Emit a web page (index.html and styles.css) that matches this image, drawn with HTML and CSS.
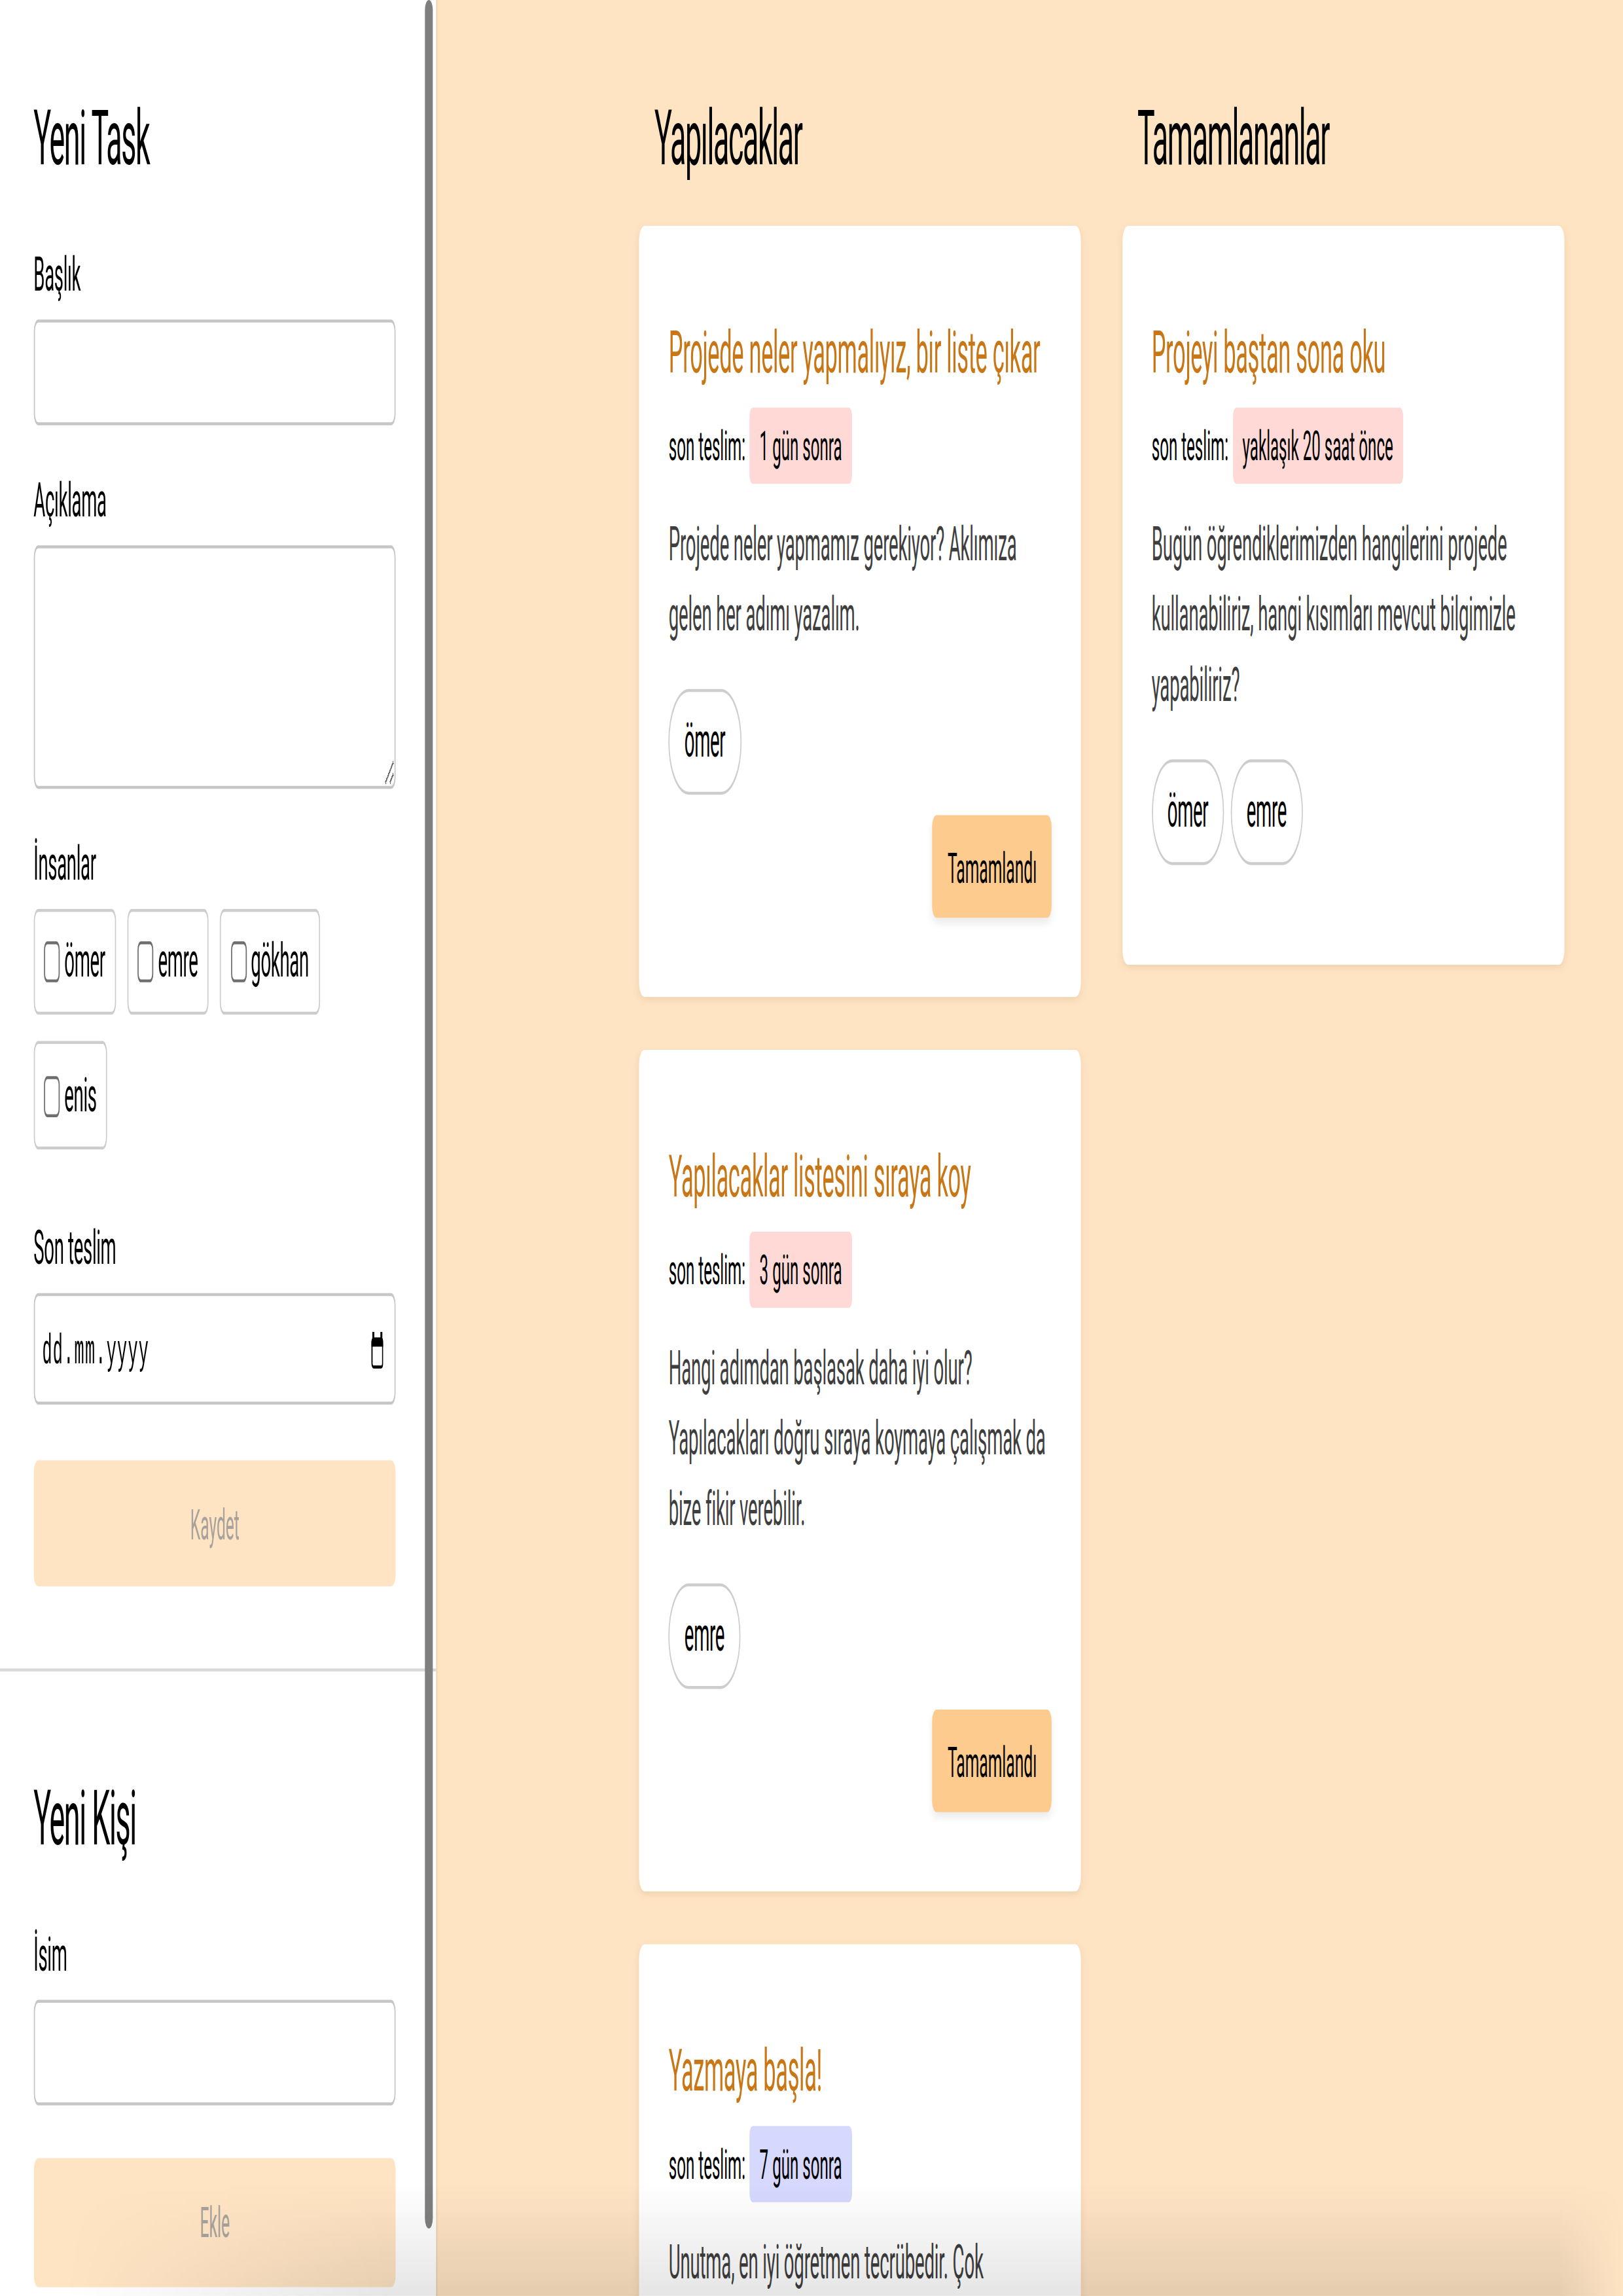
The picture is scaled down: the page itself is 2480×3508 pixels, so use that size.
FILE: index.html
```html
<!DOCTYPE html>
<html lang="tr">
<head>
<meta charset="utf-8">
<title>Tasklar</title>
<link rel="stylesheet" href="styles.css">
</head>
<body>
<div class="app">
  <aside class="sidebar">
    <form class="panel panel-task">
      <h2 class="panel-title">Yeni Task</h2>
      <div class="field">
        <label class="field-label" for="task-title">Başlık</label>
        <input class="text-input" id="task-title" type="text">
      </div>
      <div class="field">
        <label class="field-label" for="task-desc">Açıklama</label>
        <textarea class="text-area" id="task-desc"></textarea>
      </div>
      <div class="field">
        <span class="field-label">İnsanlar</span>
        <div class="people">
          <label class="person"><input class="person-check" type="checkbox">ömer</label>
          <label class="person"><input class="person-check" type="checkbox">emre</label>
          <label class="person"><input class="person-check" type="checkbox">gökhan</label>
          <label class="person"><input class="person-check" type="checkbox">enis</label>
        </div>
      </div>
      <div class="field">
        <label class="field-label" for="task-due">Son teslim</label>
        <div class="date-input">
          <input class="date-text" id="task-due" type="text" placeholder="dd.mm.yyyy">
          <svg class="date-icon" viewBox="0 0 12 13" aria-hidden="true">
            <rect x="1.4" y="0" width="1.8" height="2.6" fill="#000"/>
            <rect x="8.8" y="0" width="1.8" height="2.6" fill="#000"/>
            <path d="M0.6 3.6 A1.6 1.6 0 0 1 2.2 2 H9.8 A1.6 1.6 0 0 1 11.4 3.6 V5.2 H0.6 Z" fill="#000"/>
            <rect x="1.1" y="2.5" width="9.8" height="9.9" rx="1.4" fill="none" stroke="#000" stroke-width="1.1"/>
          </svg>
        </div>
      </div>
      <button class="submit" type="button" disabled>Kaydet</button>
    </form>
    <form class="panel panel-person">
      <h2 class="panel-title">Yeni Kişi</h2>
      <div class="field">
        <label class="field-label" for="person-name">İsim</label>
        <input class="text-input" id="person-name" type="text">
      </div>
      <button class="submit" type="button" disabled>Ekle</button>
    </form>
    <div class="scroll-thumb"></div>
  </aside>

  <main class="board">
    <section class="column">
      <h2 class="column-title">Yapılacaklar</h2>
      <article class="card">
        <h3 class="card-title">Projede neler yapmalıyız, bir liste çıkar</h3>
        <div class="due"><span>son teslim:</span><span class="due-badge due-urgent">1 gün sonra</span></div>
        <p class="card-desc">Projede neler yapmamız gerekiyor? Aklımıza gelen her adımı yazalım.</p>
        <div class="assignees"><span class="assignee">ömer</span></div>
        <div class="card-actions"><button class="done-btn" type="button">Tamamlandı</button></div>
      </article>
      <article class="card">
        <h3 class="card-title">Yapılacaklar listesini sıraya koy</h3>
        <div class="due"><span>son teslim:</span><span class="due-badge due-urgent">3 gün sonra</span></div>
        <p class="card-desc">Hangi adımdan başlasak daha iyi olur? Yapılacakları doğru sıraya koymaya çalışmak da bize fikir verebilir.</p>
        <div class="assignees"><span class="assignee">emre</span></div>
        <div class="card-actions"><button class="done-btn" type="button">Tamamlandı</button></div>
      </article>
      <article class="card">
        <h3 class="card-title">Yazmaya başla!</h3>
        <div class="due"><span>son teslim:</span><span class="due-badge due-later">7 gün sonra</span></div>
        <p class="card-desc">Unutma, en iyi öğretmen tecrübedir. Çok yazdıkça daha çok öğreneceğiz.</p>
        <div class="assignees"><span class="assignee">gökhan</span></div>
        <div class="card-actions"><button class="done-btn" type="button">Tamamlandı</button></div>
      </article>
    </section>

    <section class="column">
      <h2 class="column-title">Tamamlananlar</h2>
      <article class="card">
        <h3 class="card-title">Projeyi baştan sona oku</h3>
        <div class="due"><span>son teslim:</span><span class="due-badge due-urgent">yaklaşık 20 saat önce</span></div>
        <p class="card-desc">Bugün öğrendiklerimizden hangilerini projede kullanabiliriz, hangi kısımları mevcut bilgimizle yapabiliriz?</p>
        <div class="assignees"><span class="assignee">ömer</span><span class="assignee">emre</span></div>
      </article>
    </section>
  </main>

  <div class="bottom-shade"></div>
</div>
</body>
</html>
```

FILE: styles.css
```css
html, body {
  margin: 0;
  padding: 0;
}

body {
  width: 2480px;
  height: 3508px;
  overflow: hidden;
  background: #ffe4c4;
  font-family: Roboto, "Liberation Sans", Arial, sans-serif;
  color: #000;
}

/* The capture is a 1440 x 783 viewport stretched to 2480 x 3508 */
.app {
  position: relative;
  display: flex;
  width: 1440px;
  height: 783px;
  transform: scale(1.722222, 4.480204);
  transform-origin: 0 0;
  overflow: hidden;
}

/* ---------- Sidebar ---------- */
.sidebar {
  position: relative;
  z-index: 1;
  flex: 0 0 386.7px;
  height: 783px;
  overflow: hidden;
  background: #fff;
  box-shadow: 1px 0 0 rgba(205, 150, 90, 0.28);
}

.panel {
  display: flex;
  flex-direction: column;
  margin: 0;
}

.panel-task {
  padding: 30.8px 35.2px 27.9px 29.8px;
}

.panel-person {
  border-top: 1px solid #dadada;
  padding: 33.6px 35.2px 27px 29.8px;
}

.panel-title,
.column-title {
  margin: 0;
  font-size: 26px;
  line-height: 32px;
  font-weight: 400;
  letter-spacing: -0.8px;
  color: #000;
}

.panel-title {
  margin-bottom: 21px;
}

.field {
  display: flex;
  flex-direction: column;
  gap: 4.8px;
}

.field + .field {
  margin-top: 16.2px;
}

.field-label {
  font-size: 16px;
  line-height: 20px;
  letter-spacing: -0.2px;
  color: #000;
}

.text-input,
.text-area,
.date-input {
  box-sizing: border-box;
  width: 321.7px;
  margin: 0;
  border: 1px solid #c6c6c6;
  border-radius: 4px;
  background: #fff;
  font-family: Roboto, "Liberation Sans", Arial, sans-serif;
  font-size: 16px;
}

.text-input {
  height: 36.2px;
  padding: 0 8px;
}

.text-area {
  display: block;
  height: 83.3px;
  padding: 6px 8px;
  resize: vertical;
}

.people {
  display: flex;
  flex-wrap: wrap;
  column-gap: 10px;
  row-gap: 9.1px;
  margin-bottom: 8.5px;
}

.person {
  box-sizing: border-box;
  display: inline-flex;
  align-items: center;
  height: 36.3px;
  padding: 0 8.6px 0 8.4px;
  border: 1px solid #cdcdcd;
  border-radius: 4px;
  font-size: 16px;
  line-height: 20px;
  letter-spacing: -0.2px;
}

.person-check {
  -webkit-appearance: none;
  appearance: none;
  box-sizing: border-box;
  width: 14px;
  height: 14px;
  margin: 0 3.9px 0 0;
  border: 1px solid #6e6e6e;
  border-radius: 3px;
  background: #fff;
}

.date-input {
  display: flex;
  align-items: center;
  height: 38.2px;
  padding: 0 10px 0 6.6px;
}

.date-text {
  flex: 1;
  min-width: 0;
  margin: 0;
  padding: 1.6px 0 0;
  border: 0;
  outline: none;
  background: transparent;
  font-family: "Liberation Mono", "Courier New", monospace;
  font-size: 14.6px;
  letter-spacing: 0.75px;
  color: #000;
}

.date-text::placeholder {
  color: #000;
  opacity: 1;
}

.date-icon {
  flex: 0 0 11.6px;
  width: 11.6px;
  height: 13px;
}

.submit {
  box-sizing: border-box;
  width: 321.7px;
  height: 43.7px;
  margin: 18.4px 0 0;
  border: 0;
  border-radius: 4px;
  background: #ffe4c4;
  color: #a7a29c;
  font-family: Roboto, "Liberation Sans", Arial, sans-serif;
  font-size: 14.3px;
}

.panel-person .submit {
  height: 44px;
}

.scroll-thumb {
  position: absolute;
  top: 0;
  right: 2.3px;
  width: 7.4px;
  height: 759.6px;
  border-radius: 3.7px;
  background: #7f7f7f;
}

/* ---------- Board ---------- */
.board {
  flex: 1;
  display: flex;
  align-items: flex-start;
  gap: 36.6px;
  height: 783px;
  padding-left: 180.6px;
  overflow: hidden;
  background: #ffe4c4;
}

.column {
  display: flex;
  flex-direction: column;
  width: 391.9px;
  flex: 0 0 391.9px;
  padding-top: 30.8px;
}

.column-title {
  padding-left: 13.4px;
  margin-bottom: 14.2px;
}

.card {
  box-sizing: border-box;
  margin-bottom: 18.2px;
  padding: 30.8px 26px 26.6px;
  border-radius: 5px;
  background: #fff;
  box-shadow: 0 1px 4px rgba(120, 80, 30, 0.12);
}

.card-title {
  margin: 0;
  font-size: 20px;
  line-height: 24px;
  font-weight: 400;
  letter-spacing: -0.2px;
  color: #c97716;
}

.due {
  display: flex;
  align-items: center;
  gap: 4px;
  margin-top: 6.9px;
  font-size: 14px;
  color: #000;
}

.due-badge {
  height: 26.5px;
  line-height: 26.5px;
  padding: 0 8.5px;
  border-radius: 3px;
}

.due-urgent {
  background: #fed9d6;
}

.due-later {
  background: #d6d8fd;
}

.card-desc {
  margin: 8.6px 0 0;
  font-size: 16px;
  line-height: 24px;
  letter-spacing: -0.1px;
  color: #3e3e3e;
}

.assignees {
  display: flex;
  gap: 6px;
  margin: 13.2px 0 7.3px;
}

.assignee {
  box-sizing: border-box;
  height: 35.8px;
  padding: 0 13px;
  border: 1px solid #cdcdcd;
  border-radius: 18px;
  background: #fff;
  font-size: 16px;
  line-height: 33.8px;
  letter-spacing: -0.2px;
  color: #000;
}

.card-actions {
  display: flex;
  justify-content: flex-end;
}

.done-btn {
  height: 35.1px;
  padding: 0 13.3px;
  border: 0;
  border-radius: 4px;
  background: #fecb8e;
  color: #000;
  font-family: Roboto, "Liberation Sans", Arial, sans-serif;
  font-size: 14.3px;
  box-shadow: 0 2px 4px rgba(0, 0, 0, 0.07);
}

/* soft darkening along the bottom edge of the capture */
.bottom-shade {
  position: absolute;
  left: 0;
  right: 0;
  bottom: 0;
  z-index: 2;
  height: 38px;
  pointer-events: none;
  background: linear-gradient(to bottom, rgba(0, 0, 0, 0), rgba(0, 0, 0, 0.1));
  -webkit-mask-image: linear-gradient(to right, transparent 4%, #000 24%, #000 96%, transparent 100%);
  mask-image: linear-gradient(to right, transparent 4%, #000 24%, #000 96%, transparent 100%);
}
```
